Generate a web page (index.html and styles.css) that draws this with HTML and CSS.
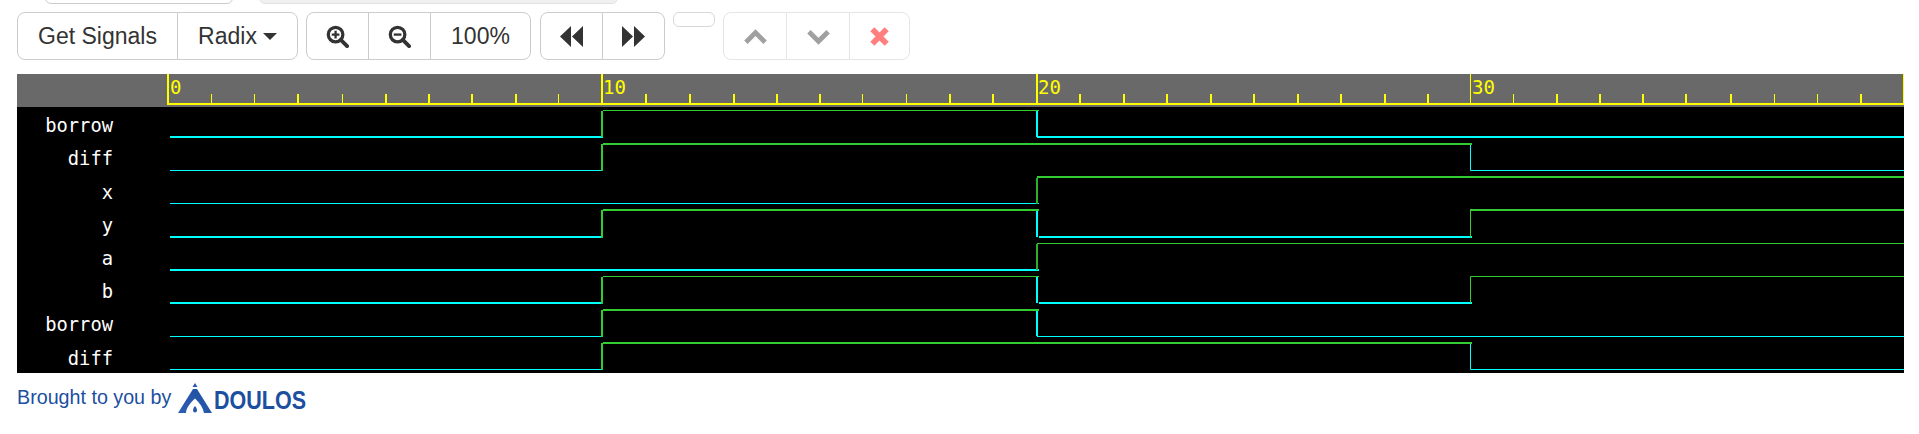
FILE: index.html
```html
<!DOCTYPE html>
<html lang="en">
<head>
<meta charset="utf-8">
<title>Waveform</title>
<link rel="stylesheet" href="styles.css">
</head>
<body>
<div class="tabs">
  <div class="tab tab-a"></div>
  <div class="tab tab-b"></div>
</div>
<div class="toolbar">
  <div class="group">
    <button class="btn w-signals">Get Signals</button>
    <button class="btn w-radix">Radix <span class="caret"></span></button>
  </div>
  <div class="group">
    <button class="btn w-icon"><svg class="icon" viewBox="0 0 24 24"><circle class="ring" cx="10" cy="10" r="7.6"/><path class="bar" d="M15.5 15.5L22 22"/><path class="plus" d="M10 6v8M6 10h8"/></svg></button>
    <button class="btn w-icon"><svg class="icon" viewBox="0 0 24 24"><circle class="ring" cx="10" cy="10" r="7.6"/><path class="bar" d="M15.5 15.5L22 22"/><path class="plus" d="M6 10h8"/></svg></button>
    <button class="btn w-pct">100%</button>
  </div>
  <div class="group group-seek">
    <button class="btn w-icon"><svg class="icon" viewBox="0 0 24 24"><path class="solid" d="M0 12L11.500 1V23ZM12.500 12L24 1V23Z"/></svg></button>
    <button class="btn w-icon"><svg class="icon" viewBox="0 0 24 24"><path class="solid" d="M24 12L12.500 1V23ZM11.500 12L0 1V23Z"/></svg></button>
  </div>
  <button class="btn btn-empty"></button>
  <div class="group group-off">
    <button class="btn w-arrow"><svg class="icon" viewBox="0 0 24 24"><path class="chev" d="M2 18L12 8L22 18"/></svg></button>
    <button class="btn w-arrow"><svg class="icon" viewBox="0 0 24 24"><path class="chev" d="M2 7L12 17L22 7"/></svg></button>
    <button class="btn w-close"><svg class="icon" viewBox="0 0 24 24"><path class="cross" d="M4.500 4.500L19.500 19.500M19.500 4.500L4.500 19.500"/></svg></button>
  </div>
</div>
<svg class="scope" viewBox="17 74 1887 299" width="1887" height="299">
  <rect class="bg" x="17" y="74" width="1887" height="299"/>
  <rect class="ruler" x="17" y="74" width="1887" height="33"/>

  <path class="tick w1" d="M211.500 94V103M254.500 94V103M342.500 94V103M558.500 94V103M862.500 94V103M906.500 94V103M1513.500 94V103M1774.500 94V103M1817.500 94V103"/>
  <path class="tick w2" d="M298 94V103M386 94V103M429 94V103M472 94V103M516 94V103M646 94V103M690 94V103M734 94V103M777 94V103M820 94V103M950 94V103M993 94V103M1080 94V103M1124 94V103M1167 94V103M1211 94V103M1254 94V103M1298 94V103M1341 94V103M1385 94V103M1428 94V103M1557 94V103M1600 94V103M1643 94V103M1686 94V103M1731 94V103M1861 94V103"/>
  <path class="tick w2" d="M168 74V105M602 74V105M1037 74V105M168 104H1904"/>
  <path class="tick w1" d="M1470.500 74V105M1903.500 74V105"/>
  <text class="time" x="170" y="94">0</text>
  <text class="time" x="603" y="94">10</text>
  <text class="time" x="1038" y="94">20</text>
  <text class="time" x="1472" y="94">30</text>

  <text class="name" x="113" y="132">borrow</text>
  <text class="name" x="113" y="165">diff</text>
  <text class="name" x="113" y="199">x</text>
  <text class="name" x="113" y="232">y</text>
  <text class="name" x="113" y="265">a</text>
  <text class="name" x="113" y="298">b</text>
  <text class="name" x="113" y="331">borrow</text>
  <text class="name" x="113" y="365">diff</text>

  <!-- borrow -->
  <path class="cy w2" d="M170 137H603"/>
  <path class="gr w2" d="M602 111V137"/>
  <path class="gr w1" d="M603 110.500H1039"/>
  <path class="cy w2" d="M1037 111V137"/>
  <path class="cy w2" d="M1037 137H1904"/>
  <!-- diff -->
  <path class="cy w1" d="M170 170.500H603"/>
  <path class="gr w2" d="M602 144V171"/>
  <path class="gr w2" d="M603 144H1472"/>
  <path class="cy w1" d="M1470.500 145V170.500H1904"/>
  <!-- x -->
  <path class="cy w1" d="M170 203.500H1039"/>
  <path class="gd w2" d="M1037 178V204"/>
  <path class="gr w2" d="M1037 177H1904"/>
  <!-- y -->
  <path class="cy w2" d="M170 237H603"/>
  <path class="gr w2" d="M602 210V238"/>
  <path class="gr w2" d="M603 210H1039"/>
  <path class="cy w2" d="M1037 211V237"/>
  <path class="cy w2" d="M1039 237H1472"/>
  <path class="gr w1" d="M1470.500 238V209"/>
  <path class="gr w2" d="M1470 210H1904"/>
  <!-- a -->
  <path class="cy w2" d="M170 270H1039"/>
  <path class="gd w2" d="M1037 244V270"/>
  <path class="gr w1" d="M1037 243.500H1904"/>
  <!-- b -->
  <path class="cy w2" d="M170 303H603"/>
  <path class="gr w2" d="M602 277V304"/>
  <path class="gr w1" d="M603 276.500H1039"/>
  <path class="cy w2" d="M1037 277V303"/>
  <path class="cy w2" d="M1039 303H1472"/>
  <path class="gr w1" d="M1470.500 303V276.500H1904"/>
  <!-- borrow -->
  <path class="cy w1" d="M170 336.500H603"/>
  <path class="gr w2" d="M602 310V337"/>
  <path class="gr w2" d="M603 310H1039"/>
  <path class="cy w2" d="M1037 311V336"/>
  <path class="cy w1" d="M1037 336.500H1904"/>
  <!-- diff -->
  <path class="cy w1" d="M170 369.500H603"/>
  <path class="gr w2" d="M602 343V370"/>
  <path class="gr w2" d="M603 343H1472"/>
  <path class="cy w1" d="M1470.500 344V369.500H1904"/>
</svg>
<div class="footer">
  <span class="credit">Brought to you by</span>
  <svg class="logo" viewBox="0 0 160 32" width="160" height="32">
    <defs>
      <linearGradient id="fade" x1="0" y1="1" x2="1" y2="0">
        <stop offset="0" stop-color="#2f5fb4"/>
        <stop offset="1" stop-color="#1c4f9f"/>
      </linearGradient>
    </defs>
    <path class="mark" d="M17 1L19.500 5H14.500Z"/>
    <path class="mark" d="M15 7H19L34 31H26C25 26 22 21 17 16.500C11 22 8 27 8 31H0Z"/>
    <path class="cut" d="M17 21C19.500 24.500 21 26.500 21 28A4 4 0 0 1 13 28C13 26.500 14.500 24.500 17 21Z"/>
    <path class="mark" d="M17 24C18.500 26 19 27 19 28.500A2 2 0 0 1 15 28.500C15 27 15.500 26 17 24Z"/>
    <text class="brand" x="36" y="27" textLength="92" lengthAdjust="spacingAndGlyphs">DOULOS</text>
  </svg>
</div>
</body>
</html>
```
FILE: styles.css
```css
html, body {
  margin: 0;
  padding: 0;
  background: #fff;
  font-family: "Liberation Sans", Arial, sans-serif;
}
body {
  height: 434px;
  overflow: hidden;
}
.tabs {
  display: flex;
  align-items: flex-end;
  height: 4px;
  padding-left: 45px;
  gap: 26px;
  overflow: hidden;
}
.tab {
  flex: none;
  height: 24px;
  box-sizing: border-box;
  border-radius: 6px;
}
.tab-a {
  width: 188px;
  border: 1px solid #ccc;
  background: #fff;
}
.tab-b {
  width: 359px;
  border: 1px solid #e2e2e2;
  background: #f0f0f0;
}
.toolbar {
  display: flex;
  align-items: flex-start;
  gap: 8px;
  margin: 8px 0 14px 17px;
  height: 48px;
}
.group {
  display: flex;
}
.group-seek {
  margin-left: 1px;
}
.btn {
  display: flex;
  align-items: center;
  justify-content: center;
  box-sizing: border-box;
  height: 48px;
  padding: 0;
  margin: 0;
  border: 1px solid #ccc;
  background: #fff;
  color: #333;
  font-family: inherit;
  font-size: 23px;
  line-height: 1;
}
.group .btn + .btn {
  margin-left: -1px;
}
.group .btn:first-child {
  border-radius: 8px 0 0 8px;
}
.group .btn:last-child {
  border-radius: 0 8px 8px 0;
}
.w-signals { width: 161px; }
.w-radix { width: 121px; gap: 6px; }
.w-icon { width: 63px; }
.w-pct { width: 101px; }
.w-arrow { width: 64px; }
.w-close { width: 61px; }
.btn-empty {
  width: 42px;
  height: 15px;
  border-radius: 6px;
  border-color: #d8d8d8;
}
.group-off {
  opacity: 0.5;
}
.caret {
  width: 0;
  height: 0;
  border-left: 7px solid transparent;
  border-right: 7px solid transparent;
  border-top: 7px solid #333;
}
.icon {
  display: block;
  width: 23px;
  height: 23px;
}
.ring {
  fill: none;
  stroke: #333;
  stroke-width: 3.4;
}
.bar {
  fill: none;
  stroke: #333;
  stroke-width: 4;
  stroke-linecap: round;
}
.plus {
  fill: none;
  stroke: #333;
  stroke-width: 2.4;
}
.solid {
  fill: #333;
}
.chev {
  fill: none;
  stroke: #444;
  stroke-width: 5;
}
.cross {
  fill: none;
  stroke: #ff0000;
  stroke-width: 6;
}
.scope {
  display: block;
  margin-left: 17px;
}
.bg { fill: #000; }
.ruler { fill: #696969; }
.tick {
  fill: none;
  stroke: #ff0;
}
.w1 { stroke-width: 1; }
.w2 { stroke-width: 2; }
.cy { fill: none; stroke: #0ff; }
.gr { fill: none; stroke: #32cd32; }
.gd { fill: none; stroke: #2ab02a; }
.time {
  fill: #ff0;
  font-family: "DejaVu Sans Mono", monospace;
  font-size: 19px;
}
.name {
  fill: #fff;
  font-family: "DejaVu Sans Mono", monospace;
  font-size: 18.800px;
  text-anchor: end;
}
.footer {
  display: flex;
  align-items: center;
  gap: 7px;
  height: 36px;
  margin-left: 17px;
  margin-top: 6px;
}
.credit {
  font-size: 19.700px;
  color: #1c4f9f;
}
.logo {
  display: block;
  flex: none;
  margin-top: 2px;
}
.mark { fill: url(#fade); }
.cut { fill: #fff; }
.brand {
  fill: #1c4f9f;
  font-family: "Liberation Sans", Arial, sans-serif;
  font-weight: 700;
  font-size: 26px;
}
```
